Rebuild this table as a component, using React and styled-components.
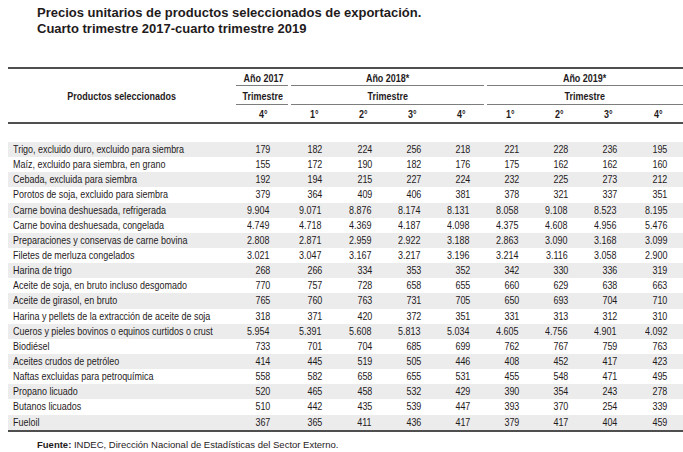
import React from "react";
import styled, { createGlobalStyle } from "styled-components";

const GlobalStyle = createGlobalStyle`
  html, body { margin: 0; padding: 0; background: #ffffff; }
  body { width: 683px; height: 452px; overflow: hidden; }
`;

const Page = styled.div`
  width: 683px;
  padding: 5px 0 0 8px;
  box-sizing: border-box;
  color: #1f1b1c;
`;

const Title = styled.h1`
  margin: 0 0 30px 29px;
  font-family: "Liberation Sans", Arial, sans-serif;
  font-weight: 700;
  font-size: 13px;
  line-height: 16px;
  color: #1f1b1c;
`;

const Table = styled.table`
  width: 675px;
  border-collapse: separate;
  border-spacing: 0;
  table-layout: fixed;
  font-family: "Liberation Sans", Arial, sans-serif;
  font-size: 11px;
  color: #1f1b1c;
`;

/* condensed face imitation: Arial-metric text narrowed like Arial Narrow */
const Narrow = styled.span`
  display: inline-block;
  white-space: nowrap;
  transform: scaleX(0.815);
  transform-origin: ${(p) => p.$origin || "left"} center;
`;

const Col = styled.col`
  width: ${(p) => p.$w}px;
`;

const HeadRow = styled.tr`
  height: ${(p) => p.$h}px;
`;

const ProductHead = styled.th`
  font-weight: 700;
  text-align: center;
  vertical-align: middle;
  border-top: 2px solid #4f4f4f;
  border-bottom: 2px solid #4f4f4f;
  padding: 0;
`;

const GroupHead = styled.th`
  position: relative;
  font-weight: 700;
  text-align: center;
  padding: 0;
  border-top: ${(p) => (p.$top ? "2px solid #4f4f4f" : "0")};
  &::after {
    content: "";
    position: absolute;
    left: ${(p) => (p.$first ? 0 : 1)}px;
    right: ${(p) => (p.$last ? 0 : 2)}px;
    bottom: 0;
    height: 1.5px;
    background: #7d7d7d;
  }
`;

const QuarterHead = styled.th`
  font-weight: 700;
  text-align: center;
  padding: 0;
  border-bottom: 2px solid #4f4f4f;
`;

const Spacer = styled.tr`
  height: 18px;
`;

const BodyRow = styled.tr`
  height: 15.15px;
  background: ${(p) => (p.$shade ? "#ececec" : "#ffffff")};
  td {
    border-bottom: ${(p) => (p.$last ? "2px solid #4f4f4f" : "0")};
  }
`;

const NameCell = styled.td`
  padding: 0 0 0 5px;
  text-align: left;
  white-space: nowrap;
  line-height: 15px;
`;

const NumCell = styled.td`
  padding: 0 ${(p) => p.$pr}px 0 0;
  text-align: right;
  white-space: nowrap;
  line-height: 15px;
`;

const Source = styled.p`
  margin: 7px 0 0 29px;
  font-family: "Liberation Sans", Arial, sans-serif;
  font-size: 9.5px;
  color: #1f1b1c;
  b { font-weight: 700; }
`;

const rows = [
  ["Trigo, excluido duro, excluido para siembra", "179", "182", "224", "256", "218", "221", "228", "236", "195"],
  ["Maíz, excluido para siembra, en grano", "155", "172", "190", "182", "176", "175", "162", "162", "160"],
  ["Cebada, excluida para siembra", "192", "194", "215", "227", "224", "232", "225", "273", "212"],
  ["Porotos de soja, excluido para siembra", "379", "364", "409", "406", "381", "378", "321", "337", "351"],
  ["Carne bovina deshuesada, refrigerada", "9.904", "9.071", "8.876", "8.174", "8.131", "8.058", "9.108", "8.523", "8.195"],
  ["Carne bovina deshuesada, congelada", "4.749", "4.718", "4.369", "4.187", "4.098", "4.375", "4.608", "4.956", "5.476"],
  ["Preparaciones y conservas de carne bovina", "2.808", "2.871", "2.959", "2.922", "3.188", "2.863", "3.090", "3.168", "3.099"],
  ["Filetes de merluza congelados", "3.021", "3.047", "3.167", "3.217", "3.196", "3.214", "3.116", "3.058", "2.900"],
  ["Harina de trigo", "268", "266", "334", "353", "352", "342", "330", "336", "319"],
  ["Aceite de soja, en bruto incluso desgomado", "770", "757", "728", "658", "655", "660", "629", "638", "663"],
  ["Aceite de girasol, en bruto", "765", "760", "763", "731", "705", "650", "693", "704", "710"],
  ["Harina y pellets de la extracción de aceite de soja", "318", "371", "420", "372", "351", "331", "313", "312", "310"],
  ["Cueros y pieles bovinos o equinos curtidos o crust", "5.954", "5.391", "5.608", "5.813", "5.034", "4.605", "4.756", "4.901", "4.092"],
  ["Biodiésel", "733", "701", "704", "685", "699", "762", "767", "759", "763"],
  ["Aceites crudos de petróleo", "414", "445", "519", "505", "446", "408", "452", "417", "423"],
  ["Naftas excluidas para petroquímica", "558", "582", "658", "655", "531", "455", "548", "471", "495"],
  ["Propano licuado", "520", "465", "458", "532", "429", "390", "354", "243", "278"],
  ["Butanos licuados", "510", "442", "435", "539", "447", "393", "370", "254", "339"],
  ["Fueloil", "367", "365", "411", "436", "417", "379", "417", "404", "459"],
];

const widths = [228, 54, 49, 49, 49, 49, 49, 49, 49, 50];
const quarters = ["4°", "1°", "2°", "3°", "4°", "1°", "2°", "3°", "4°"];

export default function App() {
  return (
    <Page>
      <GlobalStyle />
      <Title>
        Precios unitarios de productos seleccionados de exportación.
        <br />
        Cuarto trimestre 2017-cuarto trimestre 2019
      </Title>
      <Table>
        <colgroup>
          {widths.map((w, i) => (
            <Col key={i} $w={w} />
          ))}
        </colgroup>
        <thead>
          <HeadRow $h={19}>
            <ProductHead rowSpan={3}>
              <Narrow $origin="center">Productos seleccionados</Narrow>
            </ProductHead>
            <GroupHead $top $first>
              <Narrow $origin="center">Año 2017</Narrow>
            </GroupHead>
            <GroupHead $top colSpan={4}>
              <Narrow $origin="center">Año 2018*</Narrow>
            </GroupHead>
            <GroupHead $top $last colSpan={4}>
              <Narrow $origin="center">Año 2019*</Narrow>
            </GroupHead>
          </HeadRow>
          <HeadRow $h={19}>
            <GroupHead $first>
              <Narrow $origin="center">Trimestre</Narrow>
            </GroupHead>
            <GroupHead colSpan={4}>
              <Narrow $origin="center">Trimestre</Narrow>
            </GroupHead>
            <GroupHead $last colSpan={4}>
              <Narrow $origin="center">Trimestre</Narrow>
            </GroupHead>
          </HeadRow>
          <HeadRow $h={19}>
            {quarters.map((q, i) => (
              <QuarterHead key={i}>
                <Narrow $origin="center">{q}</Narrow>
              </QuarterHead>
            ))}
          </HeadRow>
          <Spacer>
            <td colSpan={10} />
          </Spacer>
        </thead>
        <tbody>
          {rows.map((r, i) => (
            <BodyRow key={i} $shade={i % 2 === 0} $last={i === rows.length - 1}>
              <NameCell>
                <Narrow>{r[0]}</Narrow>
              </NameCell>
              {r.slice(1).map((v, j) => (
                <NumCell key={j} $pr={j === 0 ? 20 : j === 1 ? 17 : 16}>
                  <Narrow $origin="right">{v}</Narrow>
                </NumCell>
              ))}
            </BodyRow>
          ))}
        </tbody>
      </Table>
      <Source>
        <b>Fuente:</b> INDEC, Dirección Nacional de Estadísticas del Sector Externo.
      </Source>
    </Page>
  );
}
